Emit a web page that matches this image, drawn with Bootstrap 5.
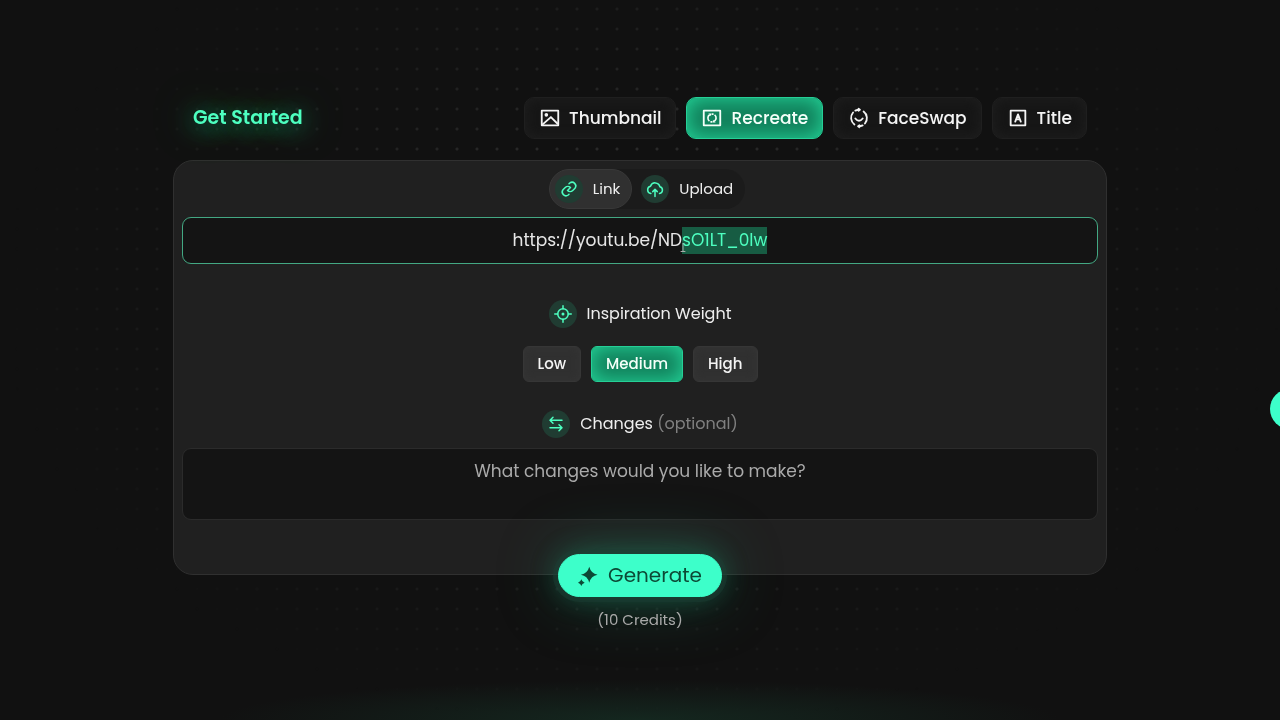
<!DOCTYPE html>
<html lang="en" data-bs-theme="dark">
<head>
<meta charset="utf-8">
<meta name="viewport" content="width=device-width, initial-scale=1">
<title>Get Started</title>
<link href="https://cdn.jsdelivr.net/npm/bootstrap@5.3.0/dist/css/bootstrap.min.css" rel="stylesheet">
<style>
  :root { --mint: #3dffca; --mint-text: #4dffc0; --ink: #111; --panel: #202020; }
  body {
    font-family: Poppins, Inter, sans-serif;
    color: #eee;
    background: radial-gradient(ellipse 420px 40px at 50% 100%, #14271f, transparent) no-repeat, var(--ink);
    min-height: 100vh;
  }
  /* dotted backdrop that fades out toward the edges */
  .dot-field {
    inset: 0;
    z-index: -1;
    background: radial-gradient(circle, #303030 1px, transparent 2px) 7px 19px / 20px 20px;
    -webkit-mask-image: radial-gradient(ellipse 50% 60% at 50% 42%, #000 20%, transparent 100%);
    mask-image: radial-gradient(ellipse 50% 60% at 50% 42%, #000 20%, transparent 100%);
  }
  svg { fill: none; stroke: currentColor; stroke-width: 2; stroke-linecap: round; stroke-linejoin: round; flex: none; }
  .gap-10 { gap: 10px; }
  .studio { max-width: 934px; padding-top: 97px; }
  .brand-title { font-size: 19px; line-height: 24px; font-weight: 600; color: var(--mint-text); text-shadow: 0 4px 24px #1fa578, 0 0 40px #178a62; }
  .btn-mode {
    --bs-btn-color: #f4f4f4; --bs-btn-bg: #161616; --bs-btn-border-color: #1f1f1f;
    --bs-btn-hover-color: #fff; --bs-btn-hover-bg: #222; --bs-btn-hover-border-color: #333;
    --bs-btn-active-color: #f4fff9; --bs-btn-active-bg: #11805b; --bs-btn-active-border-color: #25cf96;
    --bs-btn-padding-x: 14px; --bs-btn-padding-y: 8px; --bs-btn-border-radius: 10px;
    --bs-btn-font-size: 17px; --bs-btn-line-height: 24px; --bs-btn-font-weight: 500;
    box-shadow: inset 0 0 12px #202020;
  }
  .btn-mode.active { box-shadow: inset 0 0 20px #25d89c; }
  .btn-level {
    --bs-btn-bg: #303030; --bs-btn-border-color: #363636; --bs-btn-hover-bg: #383838;
    --bs-btn-padding-y: 5px; --bs-btn-border-radius: 6px; --bs-btn-font-size: 15px;
    box-shadow: inset 0 0 8px #363636;
  }
  .panel-card { background: var(--panel); border: 1px solid #303030; border-radius: 20px; padding: 8px 8px 54px; margin-top: 21px; }
  .source-tabs { background: #1b1b1b; border-radius: 21px; gap: 3px; margin-left: 14px; }
  .btn-source {
    --bs-btn-color: #eee; --bs-btn-hover-color: #fff; --bs-btn-active-color: #eee;
    --bs-btn-active-bg: #303030; --bs-btn-active-border-color: #383838;
    --bs-btn-padding-x: 5px; --bs-btn-padding-y: 5px; --bs-btn-border-radius: 20px;
    --bs-btn-font-size: 15px; --bs-btn-line-height: 28px;
  }
  .btn-source span { padding-right: 6px; }
  .disc { display: grid; place-items: center; width: 28px; height: 28px; border-radius: 50%; background: #203c32; color: var(--mint-text); flex: none; }
  .disc svg { width: 18px; height: 18px; }
  .field-label { font-size: 16px; line-height: 28px; }
  .weight-label { margin-top: 36px; margin-bottom: 18px; }
  .notes-label { margin-top: 28px; margin-bottom: 10px; }
  .field-label small { font-size: inherit; color: #808080; }
  .entry, .entry:focus { background: #141414; border: 1px solid #2b2b2b; border-radius: 9px; font-size: 17px; line-height: 27px; color: #e6e6e6; text-align: center; box-shadow: none; padding: 9px 12px; resize: none; }
  .entry::placeholder { color: #aaa; }
  .entry-link, .entry-link:focus { border-color: #43a883; caret-color: transparent; }
  .entry::selection { background: #175c43; color: #4dffc0; }
  .notes-box { height: 72px; }
  .beam { left: calc(50% + 40px); top: 26px; width: 6px; height: 10px; stroke: #aaa; stroke-width: 1; pointer-events: none; }
  .launch { margin-top: -21px; }
  .btn-generate {
    --bs-btn-color: #0c4935; --bs-btn-bg: var(--mint); --bs-btn-border-color: var(--mint);
    --bs-btn-hover-color: #06382a; --bs-btn-hover-bg: #66ffd7; --bs-btn-hover-border-color: #66ffd7;
    --bs-btn-font-size: 20px; --bs-btn-line-height: 27px; --bs-btn-padding-x: 19px; --bs-btn-padding-y: 7px;
    --bs-btn-border-radius: 22px;
    box-shadow: 0 0 0 5px #1c3c3288, 0 0 28px #1f8f6a77, 0 0 64px #1f8f6a66;
  }
  .credits { font-size: 15px; line-height: 24px; color: #aaa; margin-top: 11px; }
  .side-fab { top: 54vh; right: -30px; width: 40px; height: 40px; background: var(--mint); }
</style>
</head>
<body>
<div class="dot-field position-fixed"></div>
<main class="studio container-fluid px-0">
  <header class="d-flex flex-wrap align-items-center justify-content-between px-3 mx-1">
    <h1 class="brand-title mb-0">Get Started</h1>
    <nav class="d-flex flex-wrap gap-10" aria-label="Mode">
      <button type="button" class="btn btn-mode d-flex align-items-center gap-2">
        <svg width="22" height="22" viewBox="0 0 24 24"><rect x="3" y="4" width="18" height="16"/><circle cx="8" cy="8.500" r="1" fill="currentColor"/><path d="M4 19l9-8 7 7"/></svg>
        <span>Thumbnail</span></button>
      <button type="button" class="btn btn-mode active d-flex align-items-center gap-2">
        <svg width="22" height="22" viewBox="0 0 24 24"><rect x="3" y="4" width="18" height="16"/><g stroke-linecap="butt" stroke-width="1.800"><path d="M9.200 15.400A4.200 4.200 0 0 1 9.500 8.500M14.800 8.600A4.200 4.200 0 0 1 14.500 15.500M11.500 7.800h2.200M12.500 16.200h-2.200"/></g><path stroke="none" fill="currentColor" d="M8 7h3v3zM16 17h-3v-3z"/></svg>
        <span>Recreate</span></button>
      <button type="button" class="btn btn-mode d-flex align-items-center gap-2">
        <svg width="22" height="22" viewBox="0 0 24 24"><path d="M7 19A9 9 0 0 1 5.500 6M8 4Q10 3 12.500 3M11.500 2l1.500 1-1.500 1M17 5A9 9 0 0 1 18.500 18M16 20Q14 21 11.500 21M12.500 20l-1.500 1 1.500 1M8 12.500q4 5 8 0"/></svg>
        <span>FaceSwap</span></button>
      <button type="button" class="btn btn-mode d-flex align-items-center gap-2">
        <svg width="22" height="22" viewBox="0 0 24 24"><rect x="4" y="4" width="16" height="16"/><path d="M9 16l3-8 3 8M10 13.500h4"/></svg>
        <span>Title</span></button>
    </nav>
  </header>

  <section class="panel-card">
    <div class="d-flex justify-content-center">
      <div class="source-tabs d-flex">
        <button type="button" class="btn btn-source active d-flex align-items-center gap-10"><i class="disc"><svg viewBox="0 0 24 24"><path d="M10 14a5 5 0 0 0 7 0l3-3a5 5 0 0 0-7-7l-1 1M14 10a5 5 0 0 0-7 0l-3 3a5 5 0 0 0 7 7l1-1M10 14l4-4"/></svg></i><span>Link</span></button>
        <button type="button" class="btn btn-source d-flex align-items-center gap-10"><i class="disc"><svg viewBox="0 0 24 24"><path d="M6.500 18a5 5 0 0 1-.5-9.800A6.500 6.500 0 0 1 18.500 9 4.600 4.600 0 0 1 18 18M12 22v-9M9 15.500l3-3 3 3"/></svg></i><span>Upload</span></button>
      </div>
    </div>
    <div class="position-relative mt-2">
      <input id="link" type="text" class="form-control entry entry-link" aria-label="Video link" value="https://youtu.be/NDsO1LT_0lw" spellcheck="false" autocomplete="off">
      <svg class="beam position-absolute" viewBox="0 0 6 10"><path d="M3 0v8M1 8.500h4"/></svg>
    </div>

    <div class="field-label weight-label d-flex align-items-center justify-content-center gap-10"><i class="disc"><svg viewBox="0 0 24 24"><circle cx="12" cy="12" r="7"/><circle cx="12" cy="12" r="1" fill="currentColor"/><path d="M12 1v4M12 19v4M1 12h4M19 12h4"/></svg></i><span>Inspiration Weight</span></div>
    <div class="d-flex justify-content-center gap-10" role="group" aria-label="Inspiration weight">
      <button type="button" class="btn btn-mode btn-level">Low</button>
      <button type="button" class="btn btn-mode btn-level active">Medium</button>
      <button type="button" class="btn btn-mode btn-level">High</button>
    </div>

    <label for="notes" class="field-label notes-label d-flex align-items-center justify-content-center gap-10"><i class="disc"><svg viewBox="0 0 24 24"><path d="M20 7H5M8 3L4 7l4 4M4 17h15M16 13l4 4-4 4"/></svg></i><span>Changes <small>(optional)</small></span></label>
    <textarea id="notes" class="form-control entry notes-box" placeholder="What changes would you like to make?"></textarea>
  </section>

  <div class="launch d-flex flex-column align-items-center">
    <button type="button" class="btn btn-generate d-flex align-items-center gap-10">
      <svg width="20" height="20" viewBox="0 0 24 24"><path fill="currentColor" stroke="none" d="M13.500 1q2 8 10 9.500-8 1.500-10 9.500-2-8-10-9.500 8-1.500 10-9.500zM4 16q.8 3 4 4-3.200.8-4 4-.8-3.200-4-4 3.200-.8 4-4z"/></svg>
      <span>Generate</span></button>
    <p class="credits mb-0">(10 Credits)</p>
  </div>
</main>
<button type="button" class="side-fab position-fixed border-0 rounded-circle" aria-label="Open help"></button>
<script src="https://cdn.jsdelivr.net/npm/bootstrap@5.3.0/dist/js/bootstrap.bundle.min.js"></script>
<script>
  const link = document.getElementById('link');
  link.focus();
  link.setSelectionRange(19, link.value.length);
</script>
</body>
</html>
